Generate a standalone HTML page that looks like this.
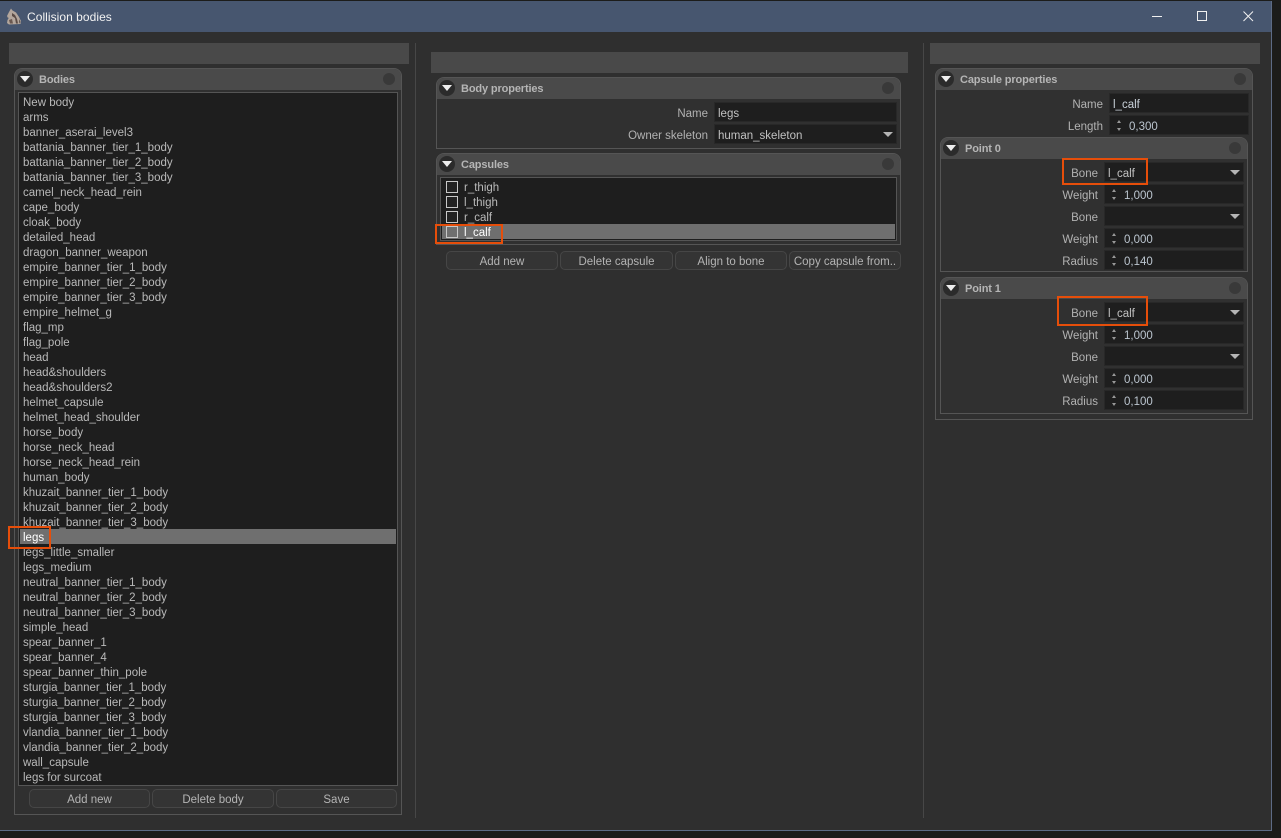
<!DOCTYPE html>
<html><head><meta charset="utf-8"><title>Collision bodies</title>
<style>
html,body{margin:0;padding:0;width:1281px;height:838px;overflow:hidden;background:#1c1c1a}
body{position:relative;font:11.5px/15px "Liberation Sans",sans-serif;color:#b9b9b9}
div,span{position:absolute;box-sizing:border-box;white-space:nowrap}
#win{left:0;top:1px;width:1271px;height:829px;background:#2f2f2f}
#bline{left:0;top:830px;width:1272px;height:1px;background:#5d6b85}
#rline{left:1271px;top:1px;width:1px;height:830px;background:#5d6b85}
#tb{left:0;top:1px;width:1271px;height:31px;background:#47566f}
#ttl{left:27px;font-size:12px;line-height:15px;color:#f2f2f2;letter-spacing:.05px}
.band{background:#494949;height:21px}
.sep{width:1px;background:#474747;top:43px;height:775px}
.grp{border:1px solid #555;background:#303030;border-radius:8px 8px 0 0}
.hd{left:0;top:0;right:0;height:21px;background:#4a4a4a;border-radius:7px 7px 0 0;font-weight:bold;font-size:11px;color:#b5b5b5;line-height:22px;letter-spacing:-.13px}
.hd b{position:absolute;left:24px;top:0;font-weight:bold}
.ci{left:2px;top:2px;width:16px;height:16px;border-radius:8px;background:#2b2b2b}
.ci:after{content:"";position:absolute;left:3px;top:5px;border-left:5px solid transparent;border-right:5px solid transparent;border-top:6px solid #eee}
.dot{right:6px;top:4px;width:12px;height:12px;border-radius:6px;background:#393939}
.list{background:#1e1e1e;border:1px solid #555}
.sel{background:#6f6f6f}
.btn{height:19px;border:1px solid #464646;border-radius:5px;background:#343434;text-align:center;line-height:20px;color:#b4b4b4}
.lb{text-align:right;height:20px;line-height:23px;color:#b2b2b2}
.in{background:#1e1e1e;border:1px solid #282828;height:20px;line-height:23px;padding-left:3px;color:#c2c2c2}
.in i{position:absolute;right:3px;top:7px;border-left:5px solid transparent;border-right:5px solid transparent;border-top:5px solid #b5b5b5}
.sp:before{content:"";position:absolute;left:7px;top:4px;border-left:2px solid transparent;border-right:2px solid transparent;border-bottom:3px solid #999}
.sp:after{content:"";position:absolute;left:7px;top:12px;border-left:2px solid transparent;border-right:2px solid transparent;border-top:3px solid #999}
.sp{padding-left:19px;color:#bcc6d0}
.o{border:2px solid #e64e0a}
.cb{width:12px;height:12px;border:1px solid #c8c8c8;background:#222}
</style></head><body>
<div id="win"></div>
<div id="tb"></div>
<div id="bline"></div>
<div id="rline"></div>
<svg style="position:absolute;left:6px;top:8px" width="16" height="17" viewBox="0 0 16 17"><path d="M5 0.5L6.5 2.5L10 4.5L13 9L15 13L14.5 16L3 16.5L1 15L1.5 12L3 9.5L2 10L1 8L3 4Z" fill="#b3a69c"/><path d="M6 5L9 7L11 11L12 15.5L10 15.5L9 10L6 8Z" fill="#5a4a44"/><path d="M3 12L6 11L7 15.5L4 15.5Z" fill="#6a5850"/><path d="M13 11L14.5 14L13.5 15.5Z" fill="#4c3f3a"/></svg>
<div id="ttl" style="top:10px">Collision bodies</div>
<svg style="position:absolute;left:1145px;top:6px" width="115" height="20" fill="none" stroke="#f0f0f0" stroke-width="1"><path d="M7 10.5H17"/><rect x="52.5" y="5.5" width="9" height="9"/><path d="M98.5 5.5L108 15M108 5.5L98.5 15"/></svg>

<div class="band" style="left:9px;top:43px;width:400px"></div>
<div class="sep" style="left:415px"></div>
<div class="band" style="left:431px;top:52px;width:477px"></div>
<div class="sep" style="left:923px"></div>
<div class="band" style="left:930px;top:43px;width:330px"></div>

<!-- Bodies -->
<div class="grp" style="left:14px;top:68px;width:388px;height:747px">
<div class="hd"><div class="ci"></div><b>Bodies</b><div class="dot"></div></div>
</div>
<div class="list" style="left:18px;top:92px;width:380px;height:694px"></div>
<div class="sel" style="left:20px;top:529px;width:376px;height:15px"></div>
<div style="left:23px;top:95px;color:#b9b9b9;line-height:15px;white-space:pre;padding-top:1px">New body
arms
banner_aserai_level3
battania_banner_tier_1_body
battania_banner_tier_2_body
battania_banner_tier_3_body
camel_neck_head_rein
cape_body
cloak_body
detailed_head
dragon_banner_weapon
empire_banner_tier_1_body
empire_banner_tier_2_body
empire_banner_tier_3_body
empire_helmet_g
flag_mp
flag_pole
head
head&amp;shoulders
head&amp;shoulders2
helmet_capsule
helmet_head_shoulder
horse_body
horse_neck_head
horse_neck_head_rein
human_body
khuzait_banner_tier_1_body
khuzait_banner_tier_2_body
khuzait_banner_tier_3_body
<span style="position:static;color:#fff">legs</span>
legs_little_smaller
legs_medium
neutral_banner_tier_1_body
neutral_banner_tier_2_body
neutral_banner_tier_3_body
simple_head
spear_banner_1
spear_banner_4
spear_banner_thin_pole
sturgia_banner_tier_1_body
sturgia_banner_tier_2_body
sturgia_banner_tier_3_body
vlandia_banner_tier_1_body
vlandia_banner_tier_2_body
wall_capsule
legs for surcoat</div>
<div class="o" style="left:8px;top:526px;width:43px;height:23px"></div>
<div class="btn" style="left:29px;top:789px;width:121px">Add new</div>
<div class="btn" style="left:152px;top:789px;width:122px">Delete body</div>
<div class="btn" style="left:276px;top:789px;width:121px">Save</div>

<!-- Body properties -->
<div class="grp" style="left:436px;top:77px;width:465px;height:72px">
<div class="hd"><div class="ci"></div><b>Body properties</b><div class="dot"></div></div>
</div>
<div class="lb" style="left:560px;top:103px;width:148px">Name</div>
<div class="in" style="left:714px;top:102px;width:183px">legs</div>
<div class="lb" style="left:560px;top:125px;width:148px">Owner skeleton</div>
<div class="in" style="left:714px;top:124px;width:183px">human_skeleton<i></i></div>

<!-- Capsules -->
<div class="grp" style="left:436px;top:153px;width:465px;height:92px">
<div class="hd"><div class="ci"></div><b>Capsules</b><div class="dot"></div></div>
</div>
<div class="list" style="left:440px;top:177px;width:457px;height:64px"></div>
<div class="sel" style="left:442px;top:224px;width:453px;height:15px"></div>
<div class="cb" style="left:446px;top:181px"></div><div style="left:464px;top:181px">r_thigh</div>
<div class="cb" style="left:446px;top:196px"></div><div style="left:464px;top:196px">l_thigh</div>
<div class="cb" style="left:446px;top:211px"></div><div style="left:464px;top:211px">r_calf</div>
<div class="cb" style="left:446px;top:226px;background:#6f6f6f"></div><div style="left:464px;top:226px;color:#fff">l_calf</div>
<div class="o" style="left:435px;top:224px;width:68px;height:20px"></div>
<div class="btn" style="left:446px;top:251px;width:112px">Add new</div>
<div class="btn" style="left:560px;top:251px;width:113px">Delete capsule</div>
<div class="btn" style="left:675px;top:251px;width:112px">Align to bone</div>
<div class="btn" style="left:789px;top:251px;width:112px">Copy capsule from..</div>

<!-- Capsule properties -->
<div class="grp" style="left:935px;top:68px;width:318px;height:352px">
<div class="hd"><div class="ci"></div><b>Capsule properties</b><div class="dot"></div></div>
</div>
<div class="lb" style="left:1000px;top:94px;width:103px">Name</div>
<div class="in" style="left:1109px;top:93px;width:140px;color:#c8d0d8">l_calf</div>
<div class="lb" style="left:1000px;top:116px;width:103px">Length</div>
<div class="in sp" style="left:1109px;top:115px;width:140px">0,300</div>

<div class="grp" style="left:940px;top:137px;width:308px;height:135px">
<div class="hd"><div class="ci"></div><b>Point 0</b><div class="dot"></div></div>
</div>
<div class="lb" style="left:1000px;top:163px;width:98px">Bone</div>
<div class="in" style="left:1104px;top:162px;width:140px">l_calf<i></i></div>
<div class="lb" style="left:1000px;top:185px;width:98px">Weight</div>
<div class="in sp" style="left:1104px;top:184px;width:140px">1,000</div>
<div class="lb" style="left:1000px;top:207px;width:98px">Bone</div>
<div class="in" style="left:1104px;top:206px;width:140px"><i></i></div>
<div class="lb" style="left:1000px;top:229px;width:98px">Weight</div>
<div class="in sp" style="left:1104px;top:228px;width:140px">0,000</div>
<div class="lb" style="left:1000px;top:251px;width:98px">Radius</div>
<div class="in sp" style="left:1104px;top:250px;width:140px">0,140</div>
<div class="o" style="left:1062px;top:158px;width:86px;height:27px"></div>

<div class="grp" style="left:940px;top:277px;width:308px;height:137px">
<div class="hd"><div class="ci"></div><b>Point 1</b><div class="dot"></div></div>
</div>
<div class="lb" style="left:1000px;top:303px;width:98px">Bone</div>
<div class="in" style="left:1104px;top:302px;width:140px">l_calf<i></i></div>
<div class="lb" style="left:1000px;top:325px;width:98px">Weight</div>
<div class="in sp" style="left:1104px;top:324px;width:140px">1,000</div>
<div class="lb" style="left:1000px;top:347px;width:98px">Bone</div>
<div class="in" style="left:1104px;top:346px;width:140px"><i></i></div>
<div class="lb" style="left:1000px;top:369px;width:98px">Weight</div>
<div class="in sp" style="left:1104px;top:368px;width:140px">0,000</div>
<div class="lb" style="left:1000px;top:391px;width:98px">Radius</div>
<div class="in sp" style="left:1104px;top:390px;width:140px">0,100</div>
<div class="o" style="left:1057px;top:296px;width:91px;height:30px"></div>
</body></html>
